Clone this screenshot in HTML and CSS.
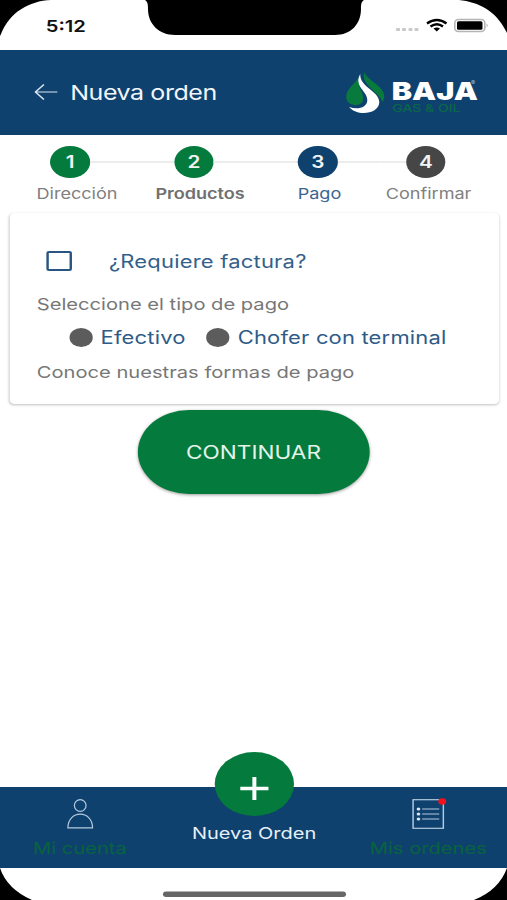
FILE: index.html
```html
<!DOCTYPE html>
<html lang="es">
<head>
  <meta charset="UTF-8" />
  <meta name="viewport" content="width=device-width, initial-scale=1.0"/>
  <title>Nueva orden</title>
  <link rel="stylesheet" href="styles.css">
</head>
<body>
  <div class="screen">
    <!-- Status bar -->
    <div class="status">
      <svg class="status-art" viewBox="0 0 507 50" preserveAspectRatio="none">
        <path d="M0 0H51C29 1 10 12 1 34L0 36Z"/>
        <path d="M507 0H459C479 2 496 11 506 31L507 33Z"/>
        <path d="M145 0C148 2 148 5 148 9C148 24 159 35 175 35H335C351 35 361 24 361 9C361 5 361 2 364 0Z"/>
        <g fill="#c9c9c9">
          <rect x="396" y="28" width="4" height="3" rx="1"/>
          <rect x="402" y="28" width="4" height="3" rx="1"/>
          <rect x="408.500" y="28" width="4" height="3" rx="1"/>
          <rect x="414.500" y="28" width="4" height="3" rx="1"/>
        </g>
        <g fill="none" stroke="#000" stroke-width="2.400">
          <path d="M427 23.500Q437 16.500 446.500 23.500"/>
          <path d="M430.500 26.500Q437 21.800 443 26.500"/>
        </g>
        <path d="M433.500 28.600Q437 26.500 440 28.600L436.800 31.400Z"/>
        <rect x="454.800" y="19.500" width="30" height="12" rx="3.500" fill="#fff" stroke="#b5b5b5" stroke-width="1.600"/>
        <rect x="457" y="21.300" width="25.500" height="8.400" rx="1.500"/>
        <path d="M486.500 23.500Q489 25.500 486.500 27.500Z" fill="#b5b5b5"/>
      </svg>
      <span class="time">5:12</span>
    </div>

    <!-- Header -->
    <header class="header">
      <svg class="back" viewBox="0 0 19 18">
        <path d="M19 8H1M8 .5L1 8L8 15.500"/>
      </svg>
      <h1>Nueva orden</h1>
      <svg class="logo" viewBox="0 0 134 44" preserveAspectRatio="none">
        <path fill="#087b3c" d="M14 5C11 12 0 18 1 27C2 32 6 34 11 34C19 33 19 27 16 20C13 14 13 10 14 5Z"/>
        <path fill="#087b3c" d="M19 1C22 10 38 14 39 25C39 28 38 30 37 31C34 21 15 14 19 1Z"/>
        <path fill="#fff" d="M15 3C14 16 34 20 34 31C34 43 12 46 4 36C12 39 22 37 22 29C22 20 8 15 15 3Z"/>
        <text class="logo-name" x="46.500" y="29.500" textLength="86" lengthAdjust="spacingAndGlyphs">BAJA</text>
        <text class="logo-mark" x="125.500" y="14">®</text>
        <text class="logo-sub" x="47" y="41.500" textLength="68" lengthAdjust="spacingAndGlyphs">GAS &amp; OIL</text>
      </svg>
    </header>

    <main class="content">
      <!-- Steps -->
      <ol class="steps">
        <li class="step done first"><div class="marker"><b>1</b></div><span>Dirección</span></li>
        <li class="step done strong"><div class="marker"><b>2</b></div><span>Productos</span></li>
        <li class="step current"><div class="marker"><b>3</b></div><span>Pago</span></li>
        <li class="step last"><div class="marker"><b>4</b></div><span>Confirmar</span></li>
      </ol>

      <!-- Payment card -->
      <section class="card">
        <div class="invoice">
          <span class="checkbox"></span>
          <span class="invoice-label">¿Requiere factura?</span>
        </div>
        <p class="hint">Seleccione el tipo de pago</p>
        <div class="options">
          <span class="dot"></span>
          <span class="option cash">Efectivo</span>
          <span class="dot"></span>
          <span class="option">Chofer con terminal</span>
        </div>
        <p class="hint more">Conoce nuestras formas de pago</p>
      </section>

      <button class="continue">CONTINUAR</button>
    </main>

    <!-- Bottom navigation -->
    <nav class="tabs">
      <div class="tab">
        <svg class="tab-icon user" viewBox="0 0 26 30" preserveAspectRatio="none">
          <circle cx="13" cy="6.500" r="5.800"/>
          <path d="M.8 28.800C.8 10.600 25.200 10.600 25.200 28.800Z"/>
        </svg>
        <span>Mi cuenta</span>
      </div>
      <div class="tab main-tab">
        <div class="fab">
          <svg viewBox="0 0 26 26"><path d="M13 1V25M1 13H25"/></svg>
        </div>
        <span>Nueva Orden</span>
      </div>
      <div class="tab">
        <svg class="tab-icon" viewBox="0 0 26 30">
          <rect x=".6" y=".7" width="24.800" height="28.600"/>
          <path d="M8 10H22M8 15H22M8 20H22"/>
          <g class="bullets">
            <circle cx="5" cy="10" r="1.500"/>
            <circle cx="5" cy="15" r="1.500"/>
            <circle cx="5" cy="20" r="1.500"/>
            <circle class="alert" cx="24.500" cy="2.500" r="3.200"/>
          </g>
        </svg>
        <span>Mis ordenes</span>
      </div>
    </nav>

    <div class="home">
      <svg viewBox="0 0 507 32" preserveAspectRatio="none">
        <path d="M0 0Q7 21 32 32H0Z"/>
        <path d="M507 0Q499 22 474 32H507Z"/>
        <rect x="163" y="23.500" width="183" height="5.500" rx="3" fill="#666"/>
      </svg>
    </div>
  </div>
</body>
</html>
```
FILE: styles.css
```css
* {
  margin: 0;
  padding: 0;
  box-sizing: border-box;
}

body {
  background: #fff;
  font-family: Inter, "Liberation Sans", sans-serif;
  overflow: hidden;
}

.screen {
  display: flex;
  flex-direction: column;
  width: 415.57px;
  height: 900px;
  background: #fff;
  transform: scaleX(1.22);
  transform-origin: 0 0;
}

svg {
  display: block;
  flex: none;
  overflow: visible;
}

.status {
  display: grid;
  height: 50px;
}

.status > * {
  grid-area: 1 / 1;
}

.status-art {
  width: 100%;
  height: 50px;
}

.time {
  padding: 16px 0 0 37.5px;
  font-size: 16.5px;
  line-height: 20px;
  font-weight: 600;
  color: #111;
}

.header {
  display: flex;
  align-items: center;
  height: 85px;
  padding: 0 22.5px 0 28px;
  background: #0f416f;
  color: #f1f6fb;
}

.back {
  width: 19px;
  height: 18px;
  fill: none;
  stroke: #dbe8f2;
  stroke-width: 1.2;
}

.header h1 {
  margin-left: 10.5px;
  font-size: 20.5px;
  font-weight: 400;
  letter-spacing: -.35px;
}

.logo {
  width: 110px;
  height: 44px;
  margin-left: auto;
}

.logo-name {
  font-size: 25px;
  font-weight: 900;
  fill: #fff;
}

.logo-mark {
  font-size: 6px;
  fill: #a9c0d6;
}

.logo-sub {
  font-size: 10.5px;
  font-weight: 500;
  fill: #0a6848;
}

.content {
  display: flex;
  flex-direction: column;
  flex: 1;
}

.steps {
  display: grid;
  grid-template-columns: 101.6px 101.6px 101.6px 75.4px;
  height: 78px;
  padding: 11px 0 0 6.6px;
  list-style: none;
}

.step {
  text-align: center;
  font-size: 14.8px;
  line-height: 20px;
  color: #808080;
}

.marker {
  display: flex;
  align-items: center;
  height: 32px;
  margin-bottom: 6px;
}

.marker::before,
.marker::after {
  content: "";
  flex: 1;
  height: 2px;
  background: #ececec;
}

.first .marker::before,
.last .marker::after {
  background: none;
}

.first span {
  padding-left: 11.5px;
}

.last span {
  padding-left: 4.5px;
}

.marker b {
  width: 32.4px;
  height: 32px;
  border-radius: 50%;
  background: #464646;
  color: #f3f3f3;
  font-size: 17px;
  line-height: 33px;
  font-weight: 600;
}

.done b {
  background: #047b3d;
}

.current b {
  background: #0f416f;
}

.strong {
  font-weight: 600;
  color: #707070;
}

.strong span {
  padding-left: 10px;
}

.current {
  color: #3a6690;
}

.current span {
  padding-left: 2.5px;
}

.card {
  height: 191px;
  margin: 0 6.5px 0 8.2px;
  padding: 36px 22px 0;
  border-radius: 4px;
  background: #fff;
  box-shadow: 0 1px 2.5px rgba(0, 0, 0, .25);
}

.invoice {
  display: flex;
  align-items: center;
  height: 24px;
  padding-left: 8.2px;
}

.checkbox {
  width: 20.4px;
  height: 20px;
  border: 2px solid #285581;
  border-radius: 2px;
}

.invoice-label {
  margin-left: 30.5px;
  font-size: 18px;
  letter-spacing: .17px;
  color: #345f8b;
}

.hint {
  margin-top: 20px;
  font-size: 16.5px;
  line-height: 22px;
  color: #777;
}

.options {
  display: flex;
  align-items: center;
  height: 24px;
  margin-top: 10px;
  padding-left: 26.5px;
}

.dot {
  width: 19px;
  height: 19px;
  border-radius: 50%;
  background: #5c5c5c;
}

.option {
  margin-left: 6.7px;
  font-size: 18px;
  letter-spacing: .15px;
  color: #2e5b88;
}

.cash {
  margin-right: 17px;
}

.hint.more {
  margin-top: 12px;
}

.continue {
  align-self: center;
  width: 189.5px;
  height: 84px;
  margin-top: 5.5px;
  border: none;
  border-radius: 42px;
  background: #047b3d;
  box-shadow: 0 1px 3px rgba(0, 0, 0, .4);
  color: #e4f4e9;
  font-family: inherit;
  font-size: 18.5px;
}

.tabs {
  display: grid;
  grid-template-columns: 131px 1fr 129px;
  height: 81px;
  background: #0f416f;
  color: #08643e;
  font-size: 16.5px;
  line-height: 22px;
}

.tab {
  display: flex;
  flex-direction: column;
  align-items: center;
  padding-top: 12px;
}

.tab-icon {
  width: 26px;
  height: 30px;
  margin-bottom: 8px;
  fill: none;
  stroke: #b5cadd;
  stroke-width: 1.2;
}

.user {
  width: 21.5px;
}

.bullets {
  fill: #d9e6f1;
  stroke: none;
}

.alert {
  fill: #f5101c;
}

.main-tab {
  padding: 0 1px 0 0;
  color: #e7f0f8;
  font-size: 16.4px;
}

.fab {
  display: flex;
  align-items: center;
  justify-content: center;
  width: 65px;
  height: 64px;
  margin: -35px 0 6px;
  padding-top: 8px;
  border-radius: 50%;
  background: #047b3d;
}

.fab svg {
  width: 25px;
  height: 25px;
  fill: none;
  stroke: #fff;
  stroke-width: 3.4;
}

.home svg {
  width: 100%;
  height: 32px;
}
```
